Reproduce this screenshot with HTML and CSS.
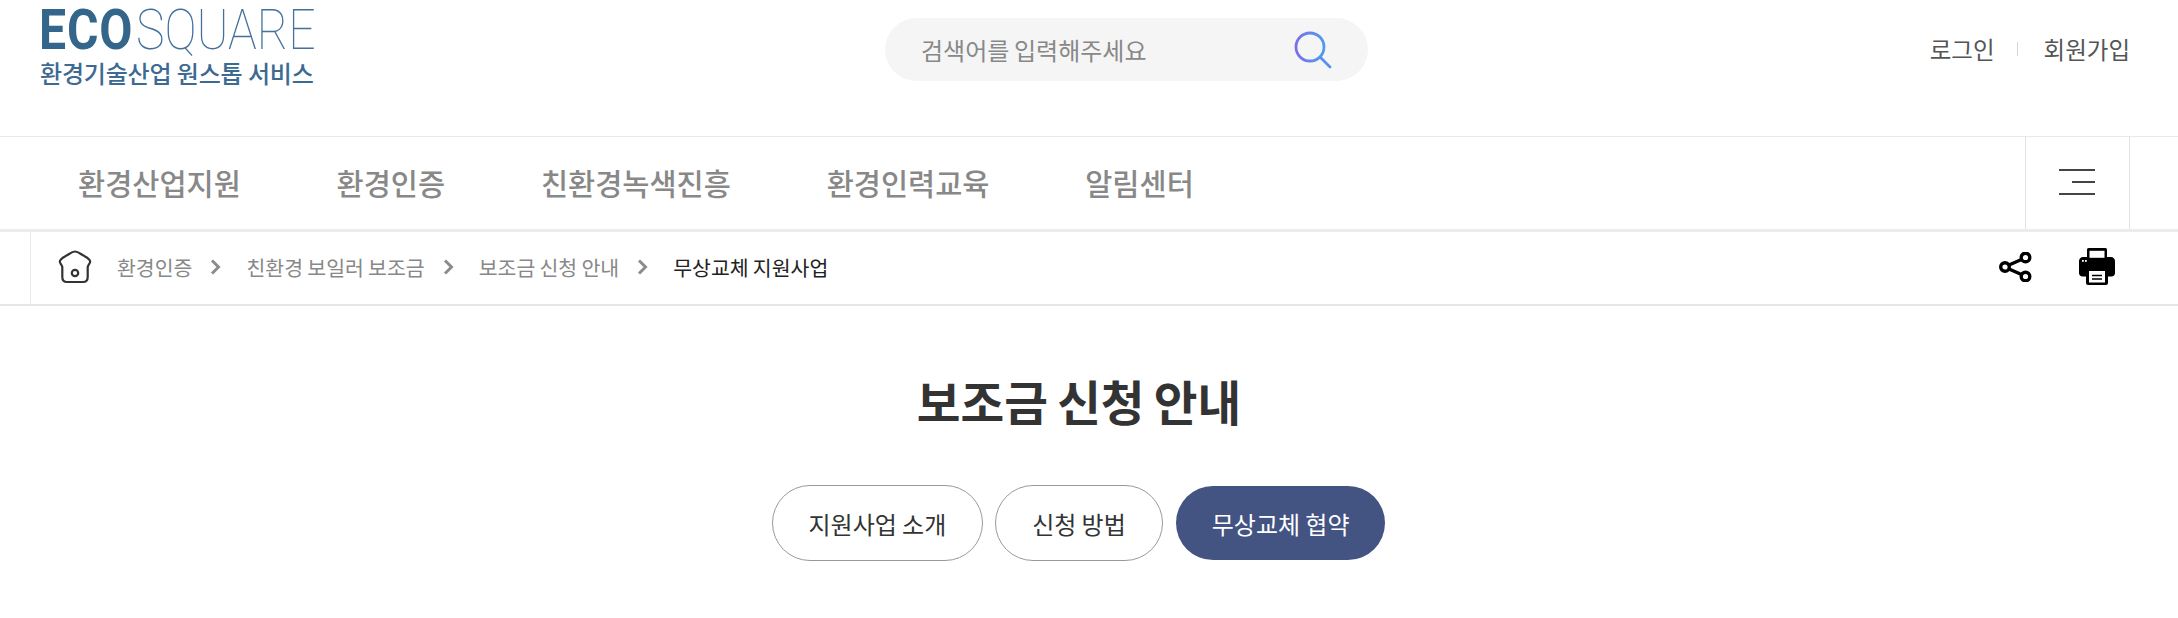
FILE: index.html
```html
<!DOCTYPE html>
<html lang="ko">
<head>
<meta charset="utf-8">
<title>보조금 신청 안내</title>
<link rel="stylesheet" href="styles.css">
</head>
<body>
<header class="top">
  <a class="logo" href="#">
    <span class="mark"><b>ECO</b><span>SQUARE</span></span>
    <span class="tag">환경기술산업 원스톱 서비스</span>
  </a>
  <form class="search">
    <span class="ph">검색어를 입력해주세요</span>
    <svg class="search-ic" width="38" height="38" viewBox="0 0 38 38" fill="none">
      <defs><linearGradient id="sg" x1="0" y1="0" x2="1" y2="0"><stop offset="0" stop-color="#7a6fe8"/><stop offset="1" stop-color="#4f9bee"/></linearGradient></defs>
      <circle cx="16" cy="16" r="14" stroke="url(#sg)" stroke-width="2.8"/>
      <path d="M26.500 26.500L36 36" stroke="#5a8ff0" stroke-width="2.8" stroke-linecap="round"/>
    </svg>
  </form>
  <nav class="auth">
    <a href="#">로그인</a><i class="sep"></i><a href="#">회원가입</a>
  </nav>
</header>
<nav class="gnb">
  <ul class="gnb-list">
    <li>환경산업지원</li>
    <li>환경인증</li>
    <li>친환경녹색진흥</li>
    <li>환경인력교육</li>
    <li>알림센터</li>
  </ul>
  <button class="burger" type="button" aria-label="메뉴">
    <i></i><i class="short"></i><i></i>
  </button>
</nav>
<div class="crumbs">
  <div class="crumb-list">
    <svg class="home" width="34" height="34" viewBox="0 0 34 34" fill="none" stroke="#333" stroke-width="2.2" stroke-linejoin="round">
      <path d="M17 1.500C14 1.500 12 3.500 9 5.300C6 7 2 8.500 1.800 11.500C1.700 13.500 4 15 4.300 17V27C4.300 30.500 6 32 9 32H25C28 32 29.700 30.500 29.700 27V17C30 15 32.300 13.500 32.200 11.500C32 8.500 28 7 25 5.300C22 3.500 20 1.500 17 1.500Z"/>
      <circle cx="17" cy="23" r="3.200"/>
    </svg>
    <span class="c">환경인증</span>
    <svg class="chev" width="11" height="16" viewBox="0 0 11 16" fill="none"><path d="M2 1.500L8.500 8L2 14.500" stroke="#8c8c8c" stroke-width="3"/></svg>
    <span class="c">친환경 보일러 보조금</span>
    <svg class="chev" width="11" height="16" viewBox="0 0 11 16" fill="none"><path d="M2 1.500L8.500 8L2 14.500" stroke="#8c8c8c" stroke-width="3"/></svg>
    <span class="c">보조금 신청 안내</span>
    <svg class="chev" width="11" height="16" viewBox="0 0 11 16" fill="none"><path d="M2 1.500L8.500 8L2 14.500" stroke="#8c8c8c" stroke-width="3"/></svg>
    <span class="c now">무상교체 지원사업</span>
  </div>
  <div class="tools">
    <svg width="33" height="30" viewBox="0 0 33 30" fill="none" stroke="#000" stroke-width="3.400">
      <circle cx="6" cy="15" r="4.300"/><circle cx="26.500" cy="5.500" r="4.300"/><circle cx="26.500" cy="24.500" r="4.300"/>
      <path d="M10 13L22.500 7.500M10 17L22.500 22.500"/>
    </svg>
    <svg width="36" height="37" viewBox="0 0 36 37">
      <path d="M8 9V1.500A1.500 1.500 0 0 1 9.500 0H26.500A1.500 1.500 0 0 1 28 1.500V9H32C34.200 9 36 10.800 36 13V25C36 27 34.500 28.500 32.500 28.500H29V35A2 2 0 0 1 27 37H9A2 2 0 0 1 7 35V28.500H3.500C1.500 28.500 0 27 0 25V13C0 10.800 1.800 9 4 9Z" fill="#000"/>
      <rect x="10.500" y="2.800" width="15" height="7" fill="#fff"/>
      <rect x="10" y="23" width="16" height="11.500" fill="#fff"/>
      <path d="M13 27.500H23M13 31H23" stroke="#000" stroke-width="1.500"/>
      <rect x="3" y="12" width="1.800" height="1.800" fill="#fff"/><rect x="6" y="12" width="1.800" height="1.800" fill="#fff"/>
    </svg>
  </div>
</div>
<main class="content">
  <h1 class="title">보조금 신청 안내</h1>
  <div class="tabs">
    <a class="tab" href="#">지원사업 소개</a>
    <a class="tab" href="#">신청 방법</a>
    <a class="tab on" href="#">무상교체 협약</a>
  </div>
</main>
</body>
</html>
```
FILE: styles.css
```css
* { box-sizing: border-box; }
html, body { margin: 0; padding: 0; }
body {
  background: #fff;
  color: #333;
  font-family: "Noto Sans CJK KR", "Noto Sans", sans-serif;
  height: 618px;
  overflow: hidden;
}
a { color: inherit; text-decoration: none; }
ul { list-style: none; margin: 0; padding: 0; }

.top {
  display: flex;
  align-items: flex-start;
  height: 137px;
  border-bottom: 1px solid #e9e9e9;
  padding: 0 48px 0 40px;
}
.logo { display: flex; flex-direction: column; width: 273px; padding-top: 5px; }
.mark {
  display: block;
  width: 273px;
  height: 51px;
  margin-left: -1px;
  font: 100 55px/51px Roboto, sans-serif;
  color: #44709e;
  white-space: nowrap;
  transform: scaleX(.875);
  transform-origin: left top;
}
.mark b { font-weight: 700; color: #34668c; letter-spacing: 1px; margin-right: 3px; }
.tag {
  font-size: 24px;
  font-weight: 500;
  line-height: 30px;
  letter-spacing: -.2px;
  word-spacing: -1px;
  color: #3c6a92;
  white-space: nowrap;
  margin-top: 2px;
}
.search {
  display: flex;
  align-items: center;
  justify-content: space-between;
  width: 483px;
  height: 63px;
  margin: 18px 0 0 572px;
  padding: 0 36px;
  border-radius: 32px;
  background: #f5f5f5;
}
.ph { font-size: 24px; word-spacing: -2px; color: #888; line-height: 30px; }
.search-ic { display: block; }
.auth {
  display: flex;
  align-items: center;
  margin-left: auto;
  margin-top: 32px;
  font-size: 23.500px;
  line-height: 34px;
  color: #555;
}
.sep { width: 1px; height: 14px; background: #d6d6d6; margin: 0 26px 0 22px; }

.gnb {
  display: flex;
  justify-content: space-between;
  height: 92px;
  padding: 0 48px 0 78px;
}
.gnb-list {
  display: flex;
  align-items: center;
  gap: 95.750px;
  padding-bottom: 2px;
  font-size: 29.500px;
  font-weight: 500;
  color: #888;
}
.burger {
  display: flex;
  flex-direction: column;
  align-items: flex-end;
  justify-content: center;
  gap: 9.500px;
  width: 105px;
  padding: 0 34px 2px;
  background: none;
  border: solid #e2e2e2;
  border-width: 0 1px;
}
.burger i { display: block; width: 36px; height: 2.500px; background: #444; }
.burger i.short { width: 23px; }

.crumbs {
  display: flex;
  align-items: center;
  justify-content: space-between;
  height: 77px;
  padding: 0 63px 0 30px;
  border-top: 3px solid #ececec;
  border-bottom: 2px solid #e5e5e5;
}
.crumb-list {
  display: flex;
  align-items: center;
  height: 100%;
  padding: 0 0 3px 27px;
  border-left: 1px solid #e9e9e9;
  font-size: 20.500px;
  word-spacing: -1.500px;
  color: #888;
}
.home { display: block; margin-right: 25px; }
.chev { display: block; margin: 0 25px 0 18px; }
.c { white-space: nowrap; }
.c.now { color: #222; }
.tools { display: flex; align-items: center; gap: 47px; padding-bottom: 3px; }
.tools svg { display: block; }

.content { display: flex; flex-direction: column; align-items: center; padding: 55px 20px 0 0; }
.title {
  margin: 0;
  font-size: 47.500px;
  font-weight: 700;
  word-spacing: -4px;
  line-height: 80px;
  color: #333;
}
.tabs { display: flex; gap: 12px; margin-top: 44px; }
.tab {
  display: flex;
  align-items: center;
  justify-content: center;
  height: 76px;
  padding: 0 36px;
  border: 1px solid #999;
  border-radius: 38px;
  font-size: 24px;
  word-spacing: -1.500px;
  color: #333;
  white-space: nowrap;
}
.tab.on { background: #435382; background-clip: padding-box; border-color: transparent; color: #fff; }
```
